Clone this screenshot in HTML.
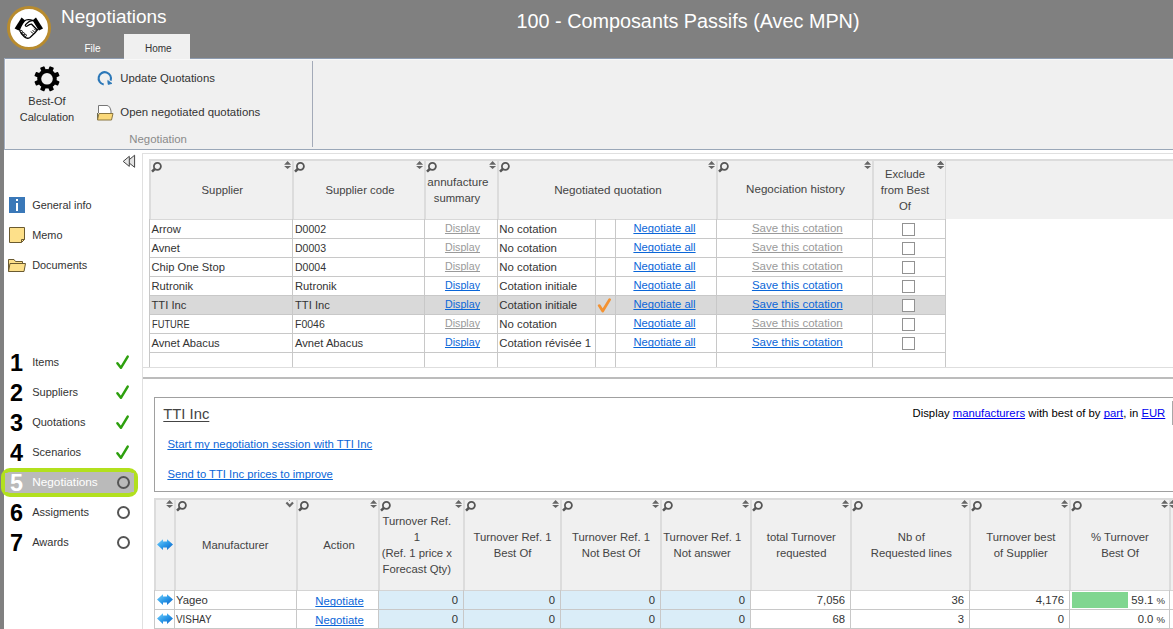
<!DOCTYPE html>
<html><head><meta charset="utf-8"><style>
html,body{margin:0;padding:0;}
body{width:1173px;height:629px;overflow:hidden;position:relative;background:#fff;font-family:"Liberation Sans", sans-serif;}
.r{position:absolute;box-sizing:content-box;}
.t{position:absolute;white-space:nowrap;text-decoration-skip-ink:none;}
u{text-decoration-skip-ink:none;}
svg.r{overflow:visible;}
</style></head><body>
<div class="r" style="left:0px;top:0px;width:1173px;height:58px;background:#808080;"></div>
<div class="r" style="left:0px;top:58px;width:1173px;height:1px;background:#8d9bb0;"></div>
<div class="r" style="left:7px;top:6px;width:38px;height:38px;border:3px solid #b88b2e;border-radius:50%;background:#fff"></div>
<svg class="r" style="left:10px;top:12px" width="40" height="32" viewBox="10 12 40 32">
<path d="M14.6 28.6 L21.6 17.6 L25.2 20.4 L18.6 30.6 Z" fill="#000"/>
<path d="M43 28.6 L36 17.6 L32.4 20.4 L39 30.6 Z" fill="#000"/>
<path d="M19.5 29.5 C21 26 24 21 26 20 C28.5 19 31 19.8 33.5 20.6 L38.4 28.6 C36.5 31.5 33 35 30 37.5 C28 38.8 26 38.2 24.5 37 C22 35 20.5 33 19.5 29.5 Z" fill="#fff" stroke="#000" stroke-width="1.3"/>
<path d="M33.5 20.6 C30.5 20.2 28 21.8 25.6 24.6 C24.8 25.8 26 26.8 27.2 26 C28.8 24.8 30.2 23.8 31.6 24.2 L37 29.8" fill="none" stroke="#000" stroke-width="1.3"/>
<circle cx="21.3" cy="31.6" r="1.1" fill="#fff" stroke="#000" stroke-width="1"/>
<circle cx="23.3" cy="33.6" r="1.1" fill="#fff" stroke="#000" stroke-width="1"/>
<circle cx="25.3" cy="35.4" r="1.1" fill="#fff" stroke="#000" stroke-width="1"/>
<path d="M31 31.5 L33 33.6 M32.6 30.2 L34.6 32.2 M34.2 28.8 L36.2 30.8" stroke="#000" stroke-width="1"/>
</svg>
<div class="t " style="left:61px;top:5.22px;font-size:19px;line-height:24px;color:#fff;">Negotiations</div>
<div class="t " style="left:438.0px;width:500px;text-align:center;top:8.20px;font-size:20.5px;line-height:26px;color:#fff;transform:scaleX(0.966);">100 - Composants Passifs (Avec MPN)</div>
<div class="r" style="left:124px;top:34px;width:66px;height:25px;background:#f0f0f0;"></div>
<div class="t " style="left:84.5px;top:42.53px;font-size:10px;line-height:12px;color:#fff;">File</div>
<div class="t " style="left:145px;top:42.53px;font-size:10px;line-height:12px;color:#333;">Home</div>
<div class="r" style="left:0px;top:59px;width:1173px;height:90px;background:#f0f0f0;"></div>
<div class="r" style="left:0px;top:149px;width:1173px;height:1px;background:#9aa7b8;"></div>
<div class="r" style="left:312px;top:61px;width:1px;height:86px;background:#a3aab8;"></div>
<div class="r" style="left:5px;top:59px;width:1168px;height:1px;background:#f8f8f8;"></div>
<div class="r" style="left:4px;top:58px;width:1px;height:92px;background:#a3afc2;"></div>
<div class="r" style="left:5px;top:59px;width:1px;height:90px;background:#f8f8f8;"></div>
<svg class="r" style="left:34px;top:66px" width="26" height="26" viewBox="0 0 26 26"><g transform="translate(13 12.8)" fill="#000"><circle r="9.8"/><rect x="-2.3" y="-12.8" width="4.6" height="6" rx="0.8" transform="rotate(22.5)"/><rect x="-2.3" y="-12.8" width="4.6" height="6" rx="0.8" transform="rotate(67.5)"/><rect x="-2.3" y="-12.8" width="4.6" height="6" rx="0.8" transform="rotate(112.5)"/><rect x="-2.3" y="-12.8" width="4.6" height="6" rx="0.8" transform="rotate(157.5)"/><rect x="-2.3" y="-12.8" width="4.6" height="6" rx="0.8" transform="rotate(202.5)"/><rect x="-2.3" y="-12.8" width="4.6" height="6" rx="0.8" transform="rotate(247.5)"/><rect x="-2.3" y="-12.8" width="4.6" height="6" rx="0.8" transform="rotate(292.5)"/><rect x="-2.3" y="-12.8" width="4.6" height="6" rx="0.8" transform="rotate(337.5)"/><circle r="5.8" fill="#f0f0f0"/></g></svg>
<div class="t " style="left:-3.0px;width:100px;text-align:center;top:93.99px;font-size:11px;line-height:14px;color:#333;">Best-Of</div>
<div class="t " style="left:-3.0px;width:100px;text-align:center;top:110.19px;font-size:11px;line-height:14px;color:#333;">Calculation</div>
<svg class="r" style="left:96px;top:70px" width="18" height="18" viewBox="0 0 18 18">
<path d="M7.72 14.5 A6.2 6.2 0 1 1 14.63 10.52" fill="none" stroke="#2c78b8" stroke-width="2.1"/>
<path d="M16.01 13.45 L11.75 10.47 L12.17 14.42 Z" fill="#2c78b8" stroke="#2c78b8" stroke-width="0.8"/>
</svg>
<div class="t " style="left:120.3px;top:70.57px;font-size:11.35px;line-height:14px;color:#333;">Update Quotations</div>
<svg class="r" style="left:96px;top:104px" width="18" height="17" viewBox="0 0 18 17">
<path d="M2.5 9 L2.5 1.5 L11 1.5 C13 1.5 14.5 4 15 7 L15 9" fill="#fff" stroke="#777" stroke-width="1"/>
<path d="M1.5 16 L1.5 9" stroke="#6a6a50" stroke-width="1"/><path d="M1.5 16 L3 9.5 L17 9.5 L15.5 16 Z" fill="#fbd97a" stroke="#8a7640" stroke-width="1"/>
</svg>
<div class="t " style="left:120.3px;top:104.65px;font-size:11.4px;line-height:14px;color:#333;">Open negotiated quotations</div>
<div class="t " style="left:129.3px;top:131.85px;font-size:11.4px;line-height:14px;color:#8a8a8a;">Negotiation</div>
<div class="r" style="left:0px;top:0px;width:4px;height:629px;background:#808080;"></div>
<div class="r" style="left:142px;top:153px;width:1px;height:476px;background:#e0e0e0;"></div>
<svg class="r" style="left:115px;top:150px" width="30" height="22" viewBox="0 0 30 22">
<path d="M19.6 5.2 L12.2 11.4 L19.6 17.3 Z" fill="#e2e2e2" stroke="#444" stroke-width="1"/>
<path d="M14.3 6.3 L8.2 11.4 L14.3 16.4 Z" fill="#e8e8e8" stroke="#444" stroke-width="1"/></svg>
<div class="r" style="left:9px;top:197px;width:16px;height:16px;background:#3a78b8;"></div>
<div class="r" style="left:16px;top:199px;width:2.2px;height:2.2px;background:#fff;"></div>
<div class="r" style="left:16px;top:203px;width:2.2px;height:8px;background:#fff;"></div>
<div class="t " style="left:32.2px;top:197.82px;font-size:10.9px;line-height:14px;color:#333;">General info</div>
<svg class="r" style="left:8px;top:226px" width="18" height="18" viewBox="0 0 18 18">
<path d="M1.5 1.5 L16.5 1.5 L16.5 13.5 L13.5 16.5 L1.5 16.5 Z" fill="#fde08a" stroke="#6a5a30" stroke-width="1"/>
<path d="M16.5 13.5 L13.5 13.5 L13.5 16.5" fill="none" stroke="#6a5a30" stroke-width="1"/></svg>
<div class="t " style="left:32.2px;top:227.82px;font-size:10.9px;line-height:14px;color:#333;">Memo</div>
<svg class="r" style="left:7px;top:258px" width="20" height="15" viewBox="0 0 20 15">
<path d="M1.5 13.5 L1.5 1.5 L7 1.5 L8.5 3.5 L15.5 3.5 L15.5 5.5" fill="#fde08a" stroke="#6a5a30" stroke-width="1"/>
<path d="M1.5 13.5 L3 5.5 L18.5 5.5 L17 13.5 Z" fill="#fde08a" stroke="#6a5a30" stroke-width="1"/></svg>
<div class="t " style="left:32.2px;top:257.92px;font-size:10.9px;line-height:14px;color:#333;">Documents</div>
<div class="t " style="left:10.3px;top:348.05px;font-size:24.4px;line-height:30px;color:#000;font-weight:bold;transform:scaleX(0.96);transform-origin:0 0;">1</div>
<div class="t " style="left:32.2px;top:354.79px;font-size:11px;line-height:14px;color:#333;">Items</div>
<svg class="r" style="left:114px;top:354.6px" width="16" height="15" viewBox="0 0 16 15"><path d="M3.4 8.2 L6.9 12.8 L13.7 1.6" fill="none" stroke="#2ea00e" stroke-width="2.5" stroke-linecap="round" stroke-linejoin="round"/></svg>
<div class="t " style="left:10.3px;top:378.05px;font-size:24.4px;line-height:30px;color:#000;font-weight:bold;transform:scaleX(0.96);transform-origin:0 0;">2</div>
<div class="t " style="left:32.2px;top:384.79px;font-size:11px;line-height:14px;color:#333;">Suppliers</div>
<svg class="r" style="left:114px;top:384.6px" width="16" height="15" viewBox="0 0 16 15"><path d="M3.4 8.2 L6.9 12.8 L13.7 1.6" fill="none" stroke="#2ea00e" stroke-width="2.5" stroke-linecap="round" stroke-linejoin="round"/></svg>
<div class="t " style="left:10.3px;top:408.05px;font-size:24.4px;line-height:30px;color:#000;font-weight:bold;transform:scaleX(0.96);transform-origin:0 0;">3</div>
<div class="t " style="left:32.2px;top:414.79px;font-size:11px;line-height:14px;color:#333;">Quotations</div>
<svg class="r" style="left:114px;top:414.6px" width="16" height="15" viewBox="0 0 16 15"><path d="M3.4 8.2 L6.9 12.8 L13.7 1.6" fill="none" stroke="#2ea00e" stroke-width="2.5" stroke-linecap="round" stroke-linejoin="round"/></svg>
<div class="t " style="left:10.3px;top:438.05px;font-size:24.4px;line-height:30px;color:#000;font-weight:bold;transform:scaleX(0.96);transform-origin:0 0;">4</div>
<div class="t " style="left:32.2px;top:444.79px;font-size:11px;line-height:14px;color:#333;">Scenarios</div>
<svg class="r" style="left:114px;top:444.6px" width="16" height="15" viewBox="0 0 16 15"><path d="M3.4 8.2 L6.9 12.8 L13.7 1.6" fill="none" stroke="#2ea00e" stroke-width="2.5" stroke-linecap="round" stroke-linejoin="round"/></svg>
<div class="r" style="left:5px;top:471px;width:131px;height:22px;background:#bababa;"></div>
<div class="r" style="left:1px;top:468px;width:129px;height:21px;border:4px solid #b2e01e;border-radius:9px"></div>
<div class="r" style="left:5px;top:472.5px;width:129px;height:19px;background:#bababa;"></div>
<div class="t " style="left:10.3px;top:468.05px;font-size:24.4px;line-height:30px;color:#fff;font-weight:bold;transform:scaleX(0.96);transform-origin:0 0;">5</div>
<div class="t " style="left:32.2px;top:475.01px;font-size:11.8px;line-height:15px;color:#fff;">Negotiations</div>
<div class="r" style="left:116.5px;top:475.6px;width:9px;height:9px;border:2px solid #555;border-radius:50%"></div>
<div class="t " style="left:10.3px;top:498.05px;font-size:24.4px;line-height:30px;color:#000;font-weight:bold;transform:scaleX(0.96);transform-origin:0 0;">6</div>
<div class="t " style="left:32.2px;top:504.79px;font-size:11px;line-height:14px;color:#333;">Assigments</div>
<div class="r" style="left:116.5px;top:505.6px;width:9px;height:9px;border:2px solid #555;border-radius:50%"></div>
<div class="t " style="left:10.3px;top:528.05px;font-size:24.4px;line-height:30px;color:#000;font-weight:bold;transform:scaleX(0.96);transform-origin:0 0;">7</div>
<div class="t " style="left:32.2px;top:534.79px;font-size:11px;line-height:14px;color:#333;">Awards</div>
<div class="r" style="left:116.5px;top:535.6px;width:9px;height:9px;border:2px solid #555;border-radius:50%"></div>
<div class="r" style="left:143px;top:153px;width:1030px;height:1px;background:#e0e0e0;"></div>
<div class="r" style="left:143px;top:367px;width:1030px;height:1px;background:#dedede;"></div>
<div class="r" style="left:149px;top:159px;width:1024px;height:60px;background:#f0f0f0;"></div>
<div class="r" style="left:149px;top:159px;width:1024px;height:2px;background:#dcdcdc;"></div>
<div class="r" style="left:149px;top:219px;width:797px;height:1px;background:#d8d8d8;"></div>
<div class="r" style="left:149px;top:159px;width:2px;height:60px;background:#dcdcdc;"></div>
<div class="r" style="left:292px;top:159px;width:2px;height:60px;background:#dcdcdc;"></div>
<div class="r" style="left:424px;top:159px;width:2px;height:60px;background:#dcdcdc;"></div>
<div class="r" style="left:497px;top:159px;width:2px;height:60px;background:#dcdcdc;"></div>
<div class="r" style="left:716px;top:159px;width:2px;height:60px;background:#dcdcdc;"></div>
<div class="r" style="left:872px;top:159px;width:2px;height:60px;background:#dcdcdc;"></div>
<div class="r" style="left:945px;top:159px;width:1px;height:60px;background:#dcdcdc;"></div>
<svg class="r" style="left:151px;top:162px" width="10" height="10" viewBox="0 0 10 10"><circle cx="6.4" cy="4.3" r="3.5" fill="none" stroke="#555" stroke-width="1.8"/><path d="M4 6.8 L1 9.6" stroke="#555" stroke-width="2.6"/></svg>
<svg class="r" style="left:284px;top:160px" width="8" height="9" viewBox="0 0 8 9"><path d="M3.6 0.9 L7.1 4.7 L0.1 4.7 Z M0.1 5.9 L7.1 5.9 L3.6 9.1 Z" fill="#666"/></svg>
<svg class="r" style="left:294px;top:162px" width="10" height="10" viewBox="0 0 10 10"><circle cx="6.4" cy="4.3" r="3.5" fill="none" stroke="#555" stroke-width="1.8"/><path d="M4 6.8 L1 9.6" stroke="#555" stroke-width="2.6"/></svg>
<svg class="r" style="left:416px;top:160px" width="8" height="9" viewBox="0 0 8 9"><path d="M3.6 0.9 L7.1 4.7 L0.1 4.7 Z M0.1 5.9 L7.1 5.9 L3.6 9.1 Z" fill="#666"/></svg>
<svg class="r" style="left:426px;top:162px" width="10" height="10" viewBox="0 0 10 10"><circle cx="6.4" cy="4.3" r="3.5" fill="none" stroke="#555" stroke-width="1.8"/><path d="M4 6.8 L1 9.6" stroke="#555" stroke-width="2.6"/></svg>
<svg class="r" style="left:489px;top:160px" width="8" height="9" viewBox="0 0 8 9"><path d="M3.6 0.9 L7.1 4.7 L0.1 4.7 Z M0.1 5.9 L7.1 5.9 L3.6 9.1 Z" fill="#666"/></svg>
<svg class="r" style="left:499px;top:162px" width="10" height="10" viewBox="0 0 10 10"><circle cx="6.4" cy="4.3" r="3.5" fill="none" stroke="#555" stroke-width="1.8"/><path d="M4 6.8 L1 9.6" stroke="#555" stroke-width="2.6"/></svg>
<svg class="r" style="left:708px;top:160px" width="8" height="9" viewBox="0 0 8 9"><path d="M3.6 0.9 L7.1 4.7 L0.1 4.7 Z M0.1 5.9 L7.1 5.9 L3.6 9.1 Z" fill="#666"/></svg>
<svg class="r" style="left:718px;top:162px" width="10" height="10" viewBox="0 0 10 10"><circle cx="6.4" cy="4.3" r="3.5" fill="none" stroke="#555" stroke-width="1.8"/><path d="M4 6.8 L1 9.6" stroke="#555" stroke-width="2.6"/></svg>
<svg class="r" style="left:864px;top:160px" width="8" height="9" viewBox="0 0 8 9"><path d="M3.6 0.9 L7.1 4.7 L0.1 4.7 Z M0.1 5.9 L7.1 5.9 L3.6 9.1 Z" fill="#666"/></svg>
<svg class="r" style="left:937px;top:160px" width="8" height="9" viewBox="0 0 8 9"><path d="M3.6 0.9 L7.1 4.7 L0.1 4.7 Z M0.1 5.9 L7.1 5.9 L3.6 9.1 Z" fill="#666"/></svg>
<svg class="r" style="left:937px;top:160px" width="8" height="9" viewBox="0 0 8 9"><path d="M3.6 0.9 L7.1 4.7 L0.1 4.7 Z M0.1 5.9 L7.1 5.9 L3.6 9.1 Z" fill="#666"/></svg>
<div class="t " style="left:152.3px;width:140px;text-align:center;top:182.58px;font-size:11.3px;line-height:14px;color:#444;">Supplier</div>
<div class="t " style="left:295.0px;width:130px;text-align:center;top:182.58px;font-size:11.3px;line-height:14px;color:#444;">Supplier code</div>
<div class="r" style="left:426px;top:170px;width:70px;height:40px;overflow:hidden">
<div class="t " style="left:-137.5px;width:200px;text-align:right;top:4.98px;font-size:11.6px;line-height:14px;color:#444;">annufacture</div>
<div class="t " style="left:-19.0px;width:100px;text-align:center;top:21.08px;font-size:11.3px;line-height:14px;color:#444;">summary</div>
</div>
<div class="t " style="left:508.0px;width:200px;text-align:center;top:181.95px;font-size:11.68px;line-height:15px;color:#444;">Negotiated quotation</div>
<div class="t " style="left:720.4px;width:150px;text-align:center;top:182.48px;font-size:11.6px;line-height:14px;color:#444;">Negociation history</div>
<div class="t " style="left:870.0px;width:70px;text-align:center;top:167.08px;font-size:11.3px;line-height:14px;color:#444;">Exclude</div>
<div class="t " style="left:870.0px;width:70px;text-align:center;top:183.08px;font-size:11.3px;line-height:14px;color:#444;">from Best</div>
<div class="t " style="left:870.0px;width:70px;text-align:center;top:199.08px;font-size:11.3px;line-height:14px;color:#444;">Of</div>
<div class="r" style="left:150px;top:220px;width:795px;height:147px;background:#fff;"></div>
<div class="r" style="left:150px;top:295px;width:795px;height:19px;background:#d9d9d9;"></div>
<div class="r" style="left:149px;top:238px;width:796px;height:1px;background:#c8c8c8;"></div>
<div class="r" style="left:149px;top:257px;width:796px;height:1px;background:#c8c8c8;"></div>
<div class="r" style="left:149px;top:276px;width:796px;height:1px;background:#c8c8c8;"></div>
<div class="r" style="left:149px;top:295px;width:796px;height:1px;background:#c8c8c8;"></div>
<div class="r" style="left:149px;top:314px;width:796px;height:1px;background:#c8c8c8;"></div>
<div class="r" style="left:149px;top:333px;width:796px;height:1px;background:#c8c8c8;"></div>
<div class="r" style="left:149px;top:352px;width:796px;height:1px;background:#c8c8c8;"></div>
<div class="r" style="left:149px;top:219px;width:1px;height:148px;background:#c8c8c8;"></div>
<div class="r" style="left:292px;top:219px;width:1px;height:148px;background:#c8c8c8;"></div>
<div class="r" style="left:424px;top:219px;width:1px;height:148px;background:#c8c8c8;"></div>
<div class="r" style="left:497px;top:219px;width:1px;height:148px;background:#c8c8c8;"></div>
<div class="r" style="left:595px;top:219px;width:1px;height:148px;background:#c8c8c8;"></div>
<div class="r" style="left:615px;top:219px;width:1px;height:148px;background:#c8c8c8;"></div>
<div class="r" style="left:716px;top:219px;width:1px;height:148px;background:#c8c8c8;"></div>
<div class="r" style="left:872px;top:219px;width:1px;height:148px;background:#c8c8c8;"></div>
<div class="r" style="left:945px;top:219px;width:1px;height:148px;background:#c8c8c8;"></div>
<div class="t " style="left:151.5px;top:222.12px;font-size:11.2px;line-height:14px;color:#333;">Arrow</div>
<div class="t " style="left:295px;top:222.12px;font-size:11.2px;line-height:14px;color:#333;transform:scaleX(0.94);transform-origin:0 0;">D0002</div>
<div class="t " style="left:427.5px;width:70px;text-align:center;top:221.99px;font-size:10.7px;line-height:13px;color:#9a9a9a;text-decoration:underline;">Display</div>
<div class="t " style="left:499.3px;top:222.05px;font-size:11.4px;line-height:14px;color:#333;">No cotation</div>
<div class="t " style="left:614.5px;width:100px;text-align:center;top:221.32px;font-size:11.2px;line-height:14px;color:#0a66d8;text-decoration:underline;">Negotiate all</div>
<div class="t " style="left:722.3px;width:150px;text-align:center;top:221.22px;font-size:11.5px;line-height:14px;color:#9a9a9a;text-decoration:underline;">Save this cotation</div>
<div class="r" style="left:902px;top:223px;width:11px;height:11px;border:1px solid #929292;background:#fff"></div>
<div class="t " style="left:151.5px;top:241.12px;font-size:11.2px;line-height:14px;color:#333;">Avnet</div>
<div class="t " style="left:295px;top:241.12px;font-size:11.2px;line-height:14px;color:#333;transform:scaleX(0.94);transform-origin:0 0;">D0003</div>
<div class="t " style="left:427.5px;width:70px;text-align:center;top:240.99px;font-size:10.7px;line-height:13px;color:#9a9a9a;text-decoration:underline;">Display</div>
<div class="t " style="left:499.3px;top:241.05px;font-size:11.4px;line-height:14px;color:#333;">No cotation</div>
<div class="t " style="left:614.5px;width:100px;text-align:center;top:240.32px;font-size:11.2px;line-height:14px;color:#0a66d8;text-decoration:underline;">Negotiate all</div>
<div class="t " style="left:722.3px;width:150px;text-align:center;top:240.22px;font-size:11.5px;line-height:14px;color:#9a9a9a;text-decoration:underline;">Save this cotation</div>
<div class="r" style="left:902px;top:242px;width:11px;height:11px;border:1px solid #929292;background:#fff"></div>
<div class="t " style="left:151.5px;top:260.12px;font-size:11.2px;line-height:14px;color:#333;">Chip One Stop</div>
<div class="t " style="left:295px;top:260.12px;font-size:11.2px;line-height:14px;color:#333;transform:scaleX(0.94);transform-origin:0 0;">D0004</div>
<div class="t " style="left:427.5px;width:70px;text-align:center;top:259.99px;font-size:10.7px;line-height:13px;color:#9a9a9a;text-decoration:underline;">Display</div>
<div class="t " style="left:499.3px;top:260.05px;font-size:11.4px;line-height:14px;color:#333;">No cotation</div>
<div class="t " style="left:614.5px;width:100px;text-align:center;top:259.32px;font-size:11.2px;line-height:14px;color:#0a66d8;text-decoration:underline;">Negotiate all</div>
<div class="t " style="left:722.3px;width:150px;text-align:center;top:259.22px;font-size:11.5px;line-height:14px;color:#9a9a9a;text-decoration:underline;">Save this cotation</div>
<div class="r" style="left:902px;top:261px;width:11px;height:11px;border:1px solid #929292;background:#fff"></div>
<div class="t " style="left:151.5px;top:279.12px;font-size:11.2px;line-height:14px;color:#333;">Rutronik</div>
<div class="t " style="left:295px;top:279.12px;font-size:11.2px;line-height:14px;color:#333;">Rutronik</div>
<div class="t " style="left:427.5px;width:70px;text-align:center;top:278.99px;font-size:10.7px;line-height:13px;color:#0a66d8;text-decoration:underline;">Display</div>
<div class="t " style="left:499.3px;top:279.05px;font-size:11.4px;line-height:14px;color:#333;">Cotation initiale</div>
<div class="t " style="left:614.5px;width:100px;text-align:center;top:278.32px;font-size:11.2px;line-height:14px;color:#0a66d8;text-decoration:underline;">Negotiate all</div>
<div class="t " style="left:722.3px;width:150px;text-align:center;top:278.22px;font-size:11.5px;line-height:14px;color:#0a66d8;text-decoration:underline;">Save this cotation</div>
<div class="r" style="left:902px;top:280px;width:11px;height:11px;border:1px solid #929292;background:#fff"></div>
<div class="t " style="left:151.5px;top:298.12px;font-size:11.2px;line-height:14px;color:#333;">TTI Inc</div>
<div class="t " style="left:295px;top:298.12px;font-size:11.2px;line-height:14px;color:#333;">TTI Inc</div>
<div class="t " style="left:427.5px;width:70px;text-align:center;top:297.99px;font-size:10.7px;line-height:13px;color:#0a66d8;text-decoration:underline;">Display</div>
<div class="t " style="left:499.3px;top:298.05px;font-size:11.4px;line-height:14px;color:#333;">Cotation initiale</div>
<div class="t " style="left:614.5px;width:100px;text-align:center;top:297.32px;font-size:11.2px;line-height:14px;color:#0a66d8;text-decoration:underline;">Negotiate all</div>
<div class="t " style="left:722.3px;width:150px;text-align:center;top:297.22px;font-size:11.5px;line-height:14px;color:#0a66d8;text-decoration:underline;">Save this cotation</div>
<div class="r" style="left:902px;top:299px;width:11px;height:11px;border:1px solid #929292;background:#fff"></div>
<svg class="r" style="left:596px;top:297px" width="16" height="16" viewBox="0 0 16 16"><path d="M3.2 8.6 L6.7 14 L13.6 2.6" fill="none" stroke="#f39232" stroke-width="2.8" stroke-linecap="round" stroke-linejoin="round"/></svg>
<div class="t " style="left:151.5px;top:317.12px;font-size:11.2px;line-height:14px;color:#333;transform:scaleX(0.83);transform-origin:0 0;">FUTURE</div>
<div class="t " style="left:295px;top:317.12px;font-size:11.2px;line-height:14px;color:#333;transform:scaleX(0.94);transform-origin:0 0;">F0046</div>
<div class="t " style="left:427.5px;width:70px;text-align:center;top:316.99px;font-size:10.7px;line-height:13px;color:#9a9a9a;text-decoration:underline;">Display</div>
<div class="t " style="left:499.3px;top:317.05px;font-size:11.4px;line-height:14px;color:#333;">No cotation</div>
<div class="t " style="left:614.5px;width:100px;text-align:center;top:316.32px;font-size:11.2px;line-height:14px;color:#0a66d8;text-decoration:underline;">Negotiate all</div>
<div class="t " style="left:722.3px;width:150px;text-align:center;top:316.22px;font-size:11.5px;line-height:14px;color:#9a9a9a;text-decoration:underline;">Save this cotation</div>
<div class="r" style="left:902px;top:318px;width:11px;height:11px;border:1px solid #929292;background:#fff"></div>
<div class="t " style="left:151.5px;top:336.12px;font-size:11.2px;line-height:14px;color:#333;">Avnet Abacus</div>
<div class="t " style="left:295px;top:336.12px;font-size:11.2px;line-height:14px;color:#333;">Avnet Abacus</div>
<div class="t " style="left:427.5px;width:70px;text-align:center;top:335.99px;font-size:10.7px;line-height:13px;color:#0a66d8;text-decoration:underline;">Display</div>
<div class="t " style="left:499.3px;top:336.05px;font-size:11.4px;line-height:14px;color:#333;">Cotation r&eacute;vis&eacute;e 1</div>
<div class="t " style="left:614.5px;width:100px;text-align:center;top:335.32px;font-size:11.2px;line-height:14px;color:#0a66d8;text-decoration:underline;">Negotiate all</div>
<div class="t " style="left:722.3px;width:150px;text-align:center;top:335.22px;font-size:11.5px;line-height:14px;color:#0a66d8;text-decoration:underline;">Save this cotation</div>
<div class="r" style="left:902px;top:337px;width:11px;height:11px;border:1px solid #929292;background:#fff"></div>
<div class="r" style="left:143px;top:377px;width:1030px;height:2px;background:#bcbcbc;"></div>
<div class="r" style="left:154px;top:397px;width:1030px;height:93px;border:1px solid #a0a0a0;background:#fff"></div>
<div class="r" style="left:1172px;top:401px;width:1px;height:24px;background:#a8a8a8;"></div>
<div class="t " style="left:163.3px;top:405.07px;font-size:14.8px;line-height:18px;color:#444;"><u style="text-underline-offset:1.6px">TTI Inc</u></div>
<div class="t " style="left:167.4px;top:436.85px;font-size:11.4px;line-height:14px;color:#0a66d8;text-decoration:underline;">Start my negotiation session with TTI Inc</div>
<div class="t " style="left:167.4px;top:467.00px;font-size:11.25px;line-height:14px;color:#0a66d8;text-decoration:underline;">Send to TTI Inc prices to improve</div>
<div class="t " style="left:765.3px;width:400px;text-align:right;top:405.88px;font-size:11.32px;line-height:14px;color:#000;">Display <u style="color:#0000f0">manufacturers</u> with best of by <u style="color:#0000f0">part</u>, in <u style="color:#0000f0">EUR</u></div>
<div class="r" style="left:154px;top:498px;width:1019px;height:92px;background:#f0f0f0;"></div>
<div class="r" style="left:154px;top:498px;width:1019px;height:2px;background:#dcdcdc;"></div>
<div class="r" style="left:154px;top:590px;width:1019px;height:1px;background:#d4d4d4;"></div>
<div class="r" style="left:154px;top:498px;width:2px;height:92px;background:#dcdcdc;"></div>
<div class="r" style="left:174px;top:498px;width:2px;height:92px;background:#dcdcdc;"></div>
<div class="r" style="left:296px;top:498px;width:2px;height:92px;background:#dcdcdc;"></div>
<div class="r" style="left:378px;top:498px;width:2px;height:92px;background:#dcdcdc;"></div>
<div class="r" style="left:463px;top:498px;width:2px;height:92px;background:#dcdcdc;"></div>
<div class="r" style="left:560px;top:498px;width:2px;height:92px;background:#dcdcdc;"></div>
<div class="r" style="left:660px;top:498px;width:2px;height:92px;background:#dcdcdc;"></div>
<div class="r" style="left:750px;top:498px;width:2px;height:92px;background:#dcdcdc;"></div>
<div class="r" style="left:850px;top:498px;width:2px;height:92px;background:#dcdcdc;"></div>
<div class="r" style="left:969px;top:498px;width:2px;height:92px;background:#dcdcdc;"></div>
<div class="r" style="left:1069px;top:498px;width:2px;height:92px;background:#dcdcdc;"></div>
<div class="r" style="left:1169px;top:498px;width:2px;height:92px;background:#dcdcdc;"></div>
<svg class="r" style="left:166px;top:499px" width="8" height="9" viewBox="0 0 8 9"><path d="M3.6 0.9 L7.1 4.7 L0.1 4.7 Z M0.1 5.9 L7.1 5.9 L3.6 9.1 Z" fill="#666"/></svg>
<svg class="r" style="left:176px;top:501px" width="10" height="10" viewBox="0 0 10 10"><circle cx="6.4" cy="4.3" r="3.5" fill="none" stroke="#555" stroke-width="1.8"/><path d="M4 6.8 L1 9.6" stroke="#555" stroke-width="2.6"/></svg>
<svg class="r" style="left:285px;top:499px" width="11" height="10" viewBox="0 0 11 10"><circle cx="4.5" cy="1.5" r="0.6" fill="#777"/><path d="M1.4 3.6 L4.7 7 L8 3.6" fill="none" stroke="#666" stroke-width="2.2"/></svg>
<svg class="r" style="left:298px;top:501px" width="10" height="10" viewBox="0 0 10 10"><circle cx="6.4" cy="4.3" r="3.5" fill="none" stroke="#555" stroke-width="1.8"/><path d="M4 6.8 L1 9.6" stroke="#555" stroke-width="2.6"/></svg>
<svg class="r" style="left:370px;top:499px" width="8" height="9" viewBox="0 0 8 9"><path d="M3.6 0.9 L7.1 4.7 L0.1 4.7 Z M0.1 5.9 L7.1 5.9 L3.6 9.1 Z" fill="#666"/></svg>
<svg class="r" style="left:380px;top:501px" width="10" height="10" viewBox="0 0 10 10"><circle cx="6.4" cy="4.3" r="3.5" fill="none" stroke="#555" stroke-width="1.8"/><path d="M4 6.8 L1 9.6" stroke="#555" stroke-width="2.6"/></svg>
<svg class="r" style="left:455px;top:499px" width="8" height="9" viewBox="0 0 8 9"><path d="M3.6 0.9 L7.1 4.7 L0.1 4.7 Z M0.1 5.9 L7.1 5.9 L3.6 9.1 Z" fill="#666"/></svg>
<svg class="r" style="left:465px;top:501px" width="10" height="10" viewBox="0 0 10 10"><circle cx="6.4" cy="4.3" r="3.5" fill="none" stroke="#555" stroke-width="1.8"/><path d="M4 6.8 L1 9.6" stroke="#555" stroke-width="2.6"/></svg>
<svg class="r" style="left:552px;top:499px" width="8" height="9" viewBox="0 0 8 9"><path d="M3.6 0.9 L7.1 4.7 L0.1 4.7 Z M0.1 5.9 L7.1 5.9 L3.6 9.1 Z" fill="#666"/></svg>
<svg class="r" style="left:562px;top:501px" width="10" height="10" viewBox="0 0 10 10"><circle cx="6.4" cy="4.3" r="3.5" fill="none" stroke="#555" stroke-width="1.8"/><path d="M4 6.8 L1 9.6" stroke="#555" stroke-width="2.6"/></svg>
<svg class="r" style="left:652px;top:499px" width="8" height="9" viewBox="0 0 8 9"><path d="M3.6 0.9 L7.1 4.7 L0.1 4.7 Z M0.1 5.9 L7.1 5.9 L3.6 9.1 Z" fill="#666"/></svg>
<svg class="r" style="left:662px;top:501px" width="10" height="10" viewBox="0 0 10 10"><circle cx="6.4" cy="4.3" r="3.5" fill="none" stroke="#555" stroke-width="1.8"/><path d="M4 6.8 L1 9.6" stroke="#555" stroke-width="2.6"/></svg>
<svg class="r" style="left:742px;top:499px" width="8" height="9" viewBox="0 0 8 9"><path d="M3.6 0.9 L7.1 4.7 L0.1 4.7 Z M0.1 5.9 L7.1 5.9 L3.6 9.1 Z" fill="#666"/></svg>
<svg class="r" style="left:752px;top:501px" width="10" height="10" viewBox="0 0 10 10"><circle cx="6.4" cy="4.3" r="3.5" fill="none" stroke="#555" stroke-width="1.8"/><path d="M4 6.8 L1 9.6" stroke="#555" stroke-width="2.6"/></svg>
<svg class="r" style="left:842px;top:499px" width="8" height="9" viewBox="0 0 8 9"><path d="M3.6 0.9 L7.1 4.7 L0.1 4.7 Z M0.1 5.9 L7.1 5.9 L3.6 9.1 Z" fill="#666"/></svg>
<svg class="r" style="left:852px;top:501px" width="10" height="10" viewBox="0 0 10 10"><circle cx="6.4" cy="4.3" r="3.5" fill="none" stroke="#555" stroke-width="1.8"/><path d="M4 6.8 L1 9.6" stroke="#555" stroke-width="2.6"/></svg>
<svg class="r" style="left:961px;top:499px" width="8" height="9" viewBox="0 0 8 9"><path d="M3.6 0.9 L7.1 4.7 L0.1 4.7 Z M0.1 5.9 L7.1 5.9 L3.6 9.1 Z" fill="#666"/></svg>
<svg class="r" style="left:971px;top:501px" width="10" height="10" viewBox="0 0 10 10"><circle cx="6.4" cy="4.3" r="3.5" fill="none" stroke="#555" stroke-width="1.8"/><path d="M4 6.8 L1 9.6" stroke="#555" stroke-width="2.6"/></svg>
<svg class="r" style="left:1061px;top:499px" width="8" height="9" viewBox="0 0 8 9"><path d="M3.6 0.9 L7.1 4.7 L0.1 4.7 Z M0.1 5.9 L7.1 5.9 L3.6 9.1 Z" fill="#666"/></svg>
<svg class="r" style="left:1071px;top:501px" width="10" height="10" viewBox="0 0 10 10"><circle cx="6.4" cy="4.3" r="3.5" fill="none" stroke="#555" stroke-width="1.8"/><path d="M4 6.8 L1 9.6" stroke="#555" stroke-width="2.6"/></svg>
<svg class="r" style="left:1161px;top:499px" width="8" height="9" viewBox="0 0 8 9"><path d="M3.6 0.9 L7.1 4.7 L0.1 4.7 Z M0.1 5.9 L7.1 5.9 L3.6 9.1 Z" fill="#666"/></svg>
<svg class="r" style="left:1169px;top:499px" width="8" height="9" viewBox="0 0 8 9"><path d="M3.6 0.9 L7.1 4.7 L0.1 4.7 Z M0.1 5.9 L7.1 5.9 L3.6 9.1 Z" fill="#666"/></svg>
<svg class="r" style="left:156px;top:538.6px" width="18" height="12" viewBox="0 0 18 12"><defs><linearGradient id="bg" x1="0" y1="0" x2="1" y2="1"><stop offset="0" stop-color="#7ad4ff"/><stop offset="0.5" stop-color="#2c9ae8"/><stop offset="1" stop-color="#0a62c8"/></linearGradient></defs><path d="M1 5.6 L7 0.2 L7 2.6 L11 2.6 L11 0.2 L17 5.6 L11 11 L11 8.6 L7 8.6 L7 11 Z" fill="url(#bg)"/></svg>
<div class="t " style="left:175.3px;width:120px;text-align:center;top:537.98px;font-size:11.3px;line-height:14px;color:#444;">Manufacturer</div>
<div class="t " style="left:299.0px;width:80px;text-align:center;top:537.98px;font-size:11.3px;line-height:14px;color:#444;">Action</div>
<div class="t " style="left:374.8px;width:84px;text-align:center;top:513.88px;font-size:11.3px;line-height:14px;color:#444;">Turnover Ref.</div>
<div class="t " style="left:374.8px;width:84px;text-align:center;top:529.88px;font-size:11.3px;line-height:14px;color:#444;">1</div>
<div class="t " style="left:374.8px;width:84px;text-align:center;top:545.88px;font-size:11.3px;line-height:14px;color:#444;">(Ref. 1 price x</div>
<div class="t " style="left:374.8px;width:84px;text-align:center;top:561.88px;font-size:11.3px;line-height:14px;color:#444;">Forecast Qty)</div>
<div class="t " style="left:457.5px;width:110px;text-align:center;top:529.88px;font-size:11.3px;line-height:14px;color:#444;">Turnover Ref. 1</div>
<div class="t " style="left:457.5px;width:110px;text-align:center;top:545.88px;font-size:11.3px;line-height:14px;color:#444;">Best Of</div>
<div class="t " style="left:556.0px;width:110px;text-align:center;top:529.88px;font-size:11.3px;line-height:14px;color:#444;">Turnover Ref. 1</div>
<div class="t " style="left:556.0px;width:110px;text-align:center;top:545.88px;font-size:11.3px;line-height:14px;color:#444;">Not Best Of</div>
<div class="t " style="left:647.2px;width:110px;text-align:center;top:529.88px;font-size:11.3px;line-height:14px;color:#444;">Turnover Ref. 1</div>
<div class="t " style="left:647.2px;width:110px;text-align:center;top:545.88px;font-size:11.3px;line-height:14px;color:#444;">Not answer</div>
<div class="t " style="left:746.3px;width:110px;text-align:center;top:529.88px;font-size:11.3px;line-height:14px;color:#444;">total Turnover</div>
<div class="t " style="left:746.3px;width:110px;text-align:center;top:545.88px;font-size:11.3px;line-height:14px;color:#444;">requested</div>
<div class="t " style="left:856.3px;width:110px;text-align:center;top:529.88px;font-size:11.3px;line-height:14px;color:#444;">Nb of</div>
<div class="t " style="left:856.3px;width:110px;text-align:center;top:545.88px;font-size:11.3px;line-height:14px;color:#444;">Requested lines</div>
<div class="t " style="left:965.8px;width:110px;text-align:center;top:529.88px;font-size:11.3px;line-height:14px;color:#444;">Turnover best</div>
<div class="t " style="left:965.8px;width:110px;text-align:center;top:545.88px;font-size:11.3px;line-height:14px;color:#444;">of Supplier</div>
<div class="t " style="left:1065.0px;width:110px;text-align:center;top:529.88px;font-size:11.3px;line-height:14px;color:#444;">% Turnover</div>
<div class="t " style="left:1065.0px;width:110px;text-align:center;top:545.88px;font-size:11.3px;line-height:14px;color:#444;">Best Of</div>
<div class="r" style="left:155px;top:591px;width:1018px;height:38px;background:#fff;"></div>
<div class="r" style="left:379px;top:591px;width:84px;height:38px;background:#daedf8;"></div>
<div class="r" style="left:464px;top:591px;width:96px;height:38px;background:#daedf8;"></div>
<div class="r" style="left:561px;top:591px;width:99px;height:38px;background:#daedf8;"></div>
<div class="r" style="left:661px;top:591px;width:89px;height:38px;background:#daedf8;"></div>
<div class="r" style="left:154px;top:609px;width:1019px;height:1px;background:#c8c8c8;"></div>
<div class="r" style="left:154px;top:628px;width:1019px;height:1px;background:#c8c8c8;"></div>
<div class="r" style="left:154px;top:590px;width:1px;height:39px;background:#c8c8c8;"></div>
<div class="r" style="left:174px;top:590px;width:1px;height:39px;background:#c8c8c8;"></div>
<div class="r" style="left:296px;top:590px;width:1px;height:39px;background:#c8c8c8;"></div>
<div class="r" style="left:378px;top:590px;width:1px;height:39px;background:#c8c8c8;"></div>
<div class="r" style="left:463px;top:590px;width:1px;height:39px;background:#c8c8c8;"></div>
<div class="r" style="left:560px;top:590px;width:1px;height:39px;background:#c8c8c8;"></div>
<div class="r" style="left:660px;top:590px;width:1px;height:39px;background:#c8c8c8;"></div>
<div class="r" style="left:750px;top:590px;width:1px;height:39px;background:#c8c8c8;"></div>
<div class="r" style="left:850px;top:590px;width:1px;height:39px;background:#c8c8c8;"></div>
<div class="r" style="left:969px;top:590px;width:1px;height:39px;background:#c8c8c8;"></div>
<div class="r" style="left:1069px;top:590px;width:1px;height:39px;background:#c8c8c8;"></div>
<div class="r" style="left:1169px;top:590px;width:1px;height:39px;background:#c8c8c8;"></div>
<svg class="r" style="left:156px;top:593.6px" width="18" height="12" viewBox="0 0 18 12"><defs><linearGradient id="bg" x1="0" y1="0" x2="1" y2="1"><stop offset="0" stop-color="#7ad4ff"/><stop offset="0.5" stop-color="#2c9ae8"/><stop offset="1" stop-color="#0a62c8"/></linearGradient></defs><path d="M1 5.6 L7 0.2 L7 2.6 L11 2.6 L11 0.2 L17 5.6 L11 11 L11 8.6 L7 8.6 L7 11 Z" fill="url(#bg)"/></svg>
<div class="t " style="left:176px;top:593.08px;font-size:11.3px;line-height:14px;color:#333;">Yageo</div>
<div class="t " style="left:299.5px;width:80px;text-align:center;top:594.08px;font-size:11.3px;line-height:14px;color:#0a66d8;text-decoration:underline;">Negotiate</div>
<div class="t " style="left:368px;width:90px;text-align:right;top:593.08px;font-size:11.3px;line-height:14px;color:#333;">0</div>
<div class="t " style="left:465px;width:90px;text-align:right;top:593.08px;font-size:11.3px;line-height:14px;color:#333;">0</div>
<div class="t " style="left:565px;width:90px;text-align:right;top:593.08px;font-size:11.3px;line-height:14px;color:#333;">0</div>
<div class="t " style="left:655px;width:90px;text-align:right;top:593.08px;font-size:11.3px;line-height:14px;color:#333;">0</div>
<div class="t " style="left:755px;width:90px;text-align:right;top:593.08px;font-size:11.3px;line-height:14px;color:#333;">7,056</div>
<div class="t " style="left:874px;width:90px;text-align:right;top:593.08px;font-size:11.3px;line-height:14px;color:#333;">36</div>
<div class="t " style="left:974px;width:90px;text-align:right;top:593.08px;font-size:11.3px;line-height:14px;color:#333;">4,176</div>
<div class="r" style="left:1072px;top:592px;width:56px;height:16px;background:#80d690;"></div>
<div class="t " style="left:1075px;width:90px;text-align:right;top:593.08px;font-size:11.3px;line-height:14px;color:#333;">59.1 <span style="font-size:9.6px">%</span></div>
<svg class="r" style="left:156px;top:612.6px" width="18" height="12" viewBox="0 0 18 12"><defs><linearGradient id="bg" x1="0" y1="0" x2="1" y2="1"><stop offset="0" stop-color="#7ad4ff"/><stop offset="0.5" stop-color="#2c9ae8"/><stop offset="1" stop-color="#0a62c8"/></linearGradient></defs><path d="M1 5.6 L7 0.2 L7 2.6 L11 2.6 L11 0.2 L17 5.6 L11 11 L11 8.6 L7 8.6 L7 11 Z" fill="url(#bg)"/></svg>
<div class="t " style="left:176px;top:612.08px;font-size:11.3px;line-height:14px;color:#333;transform:scaleX(0.876);transform-origin:0 0;">VISHAY</div>
<div class="t " style="left:299.5px;width:80px;text-align:center;top:613.08px;font-size:11.3px;line-height:14px;color:#0a66d8;text-decoration:underline;">Negotiate</div>
<div class="t " style="left:368px;width:90px;text-align:right;top:612.08px;font-size:11.3px;line-height:14px;color:#333;">0</div>
<div class="t " style="left:465px;width:90px;text-align:right;top:612.08px;font-size:11.3px;line-height:14px;color:#333;">0</div>
<div class="t " style="left:565px;width:90px;text-align:right;top:612.08px;font-size:11.3px;line-height:14px;color:#333;">0</div>
<div class="t " style="left:655px;width:90px;text-align:right;top:612.08px;font-size:11.3px;line-height:14px;color:#333;">0</div>
<div class="t " style="left:755px;width:90px;text-align:right;top:612.08px;font-size:11.3px;line-height:14px;color:#333;">68</div>
<div class="t " style="left:874px;width:90px;text-align:right;top:612.08px;font-size:11.3px;line-height:14px;color:#333;">3</div>
<div class="t " style="left:974px;width:90px;text-align:right;top:612.08px;font-size:11.3px;line-height:14px;color:#333;">0</div>
<div class="t " style="left:1075px;width:90px;text-align:right;top:612.08px;font-size:11.3px;line-height:14px;color:#333;">0.0 <span style="font-size:9.6px">%</span></div>
</body></html>
